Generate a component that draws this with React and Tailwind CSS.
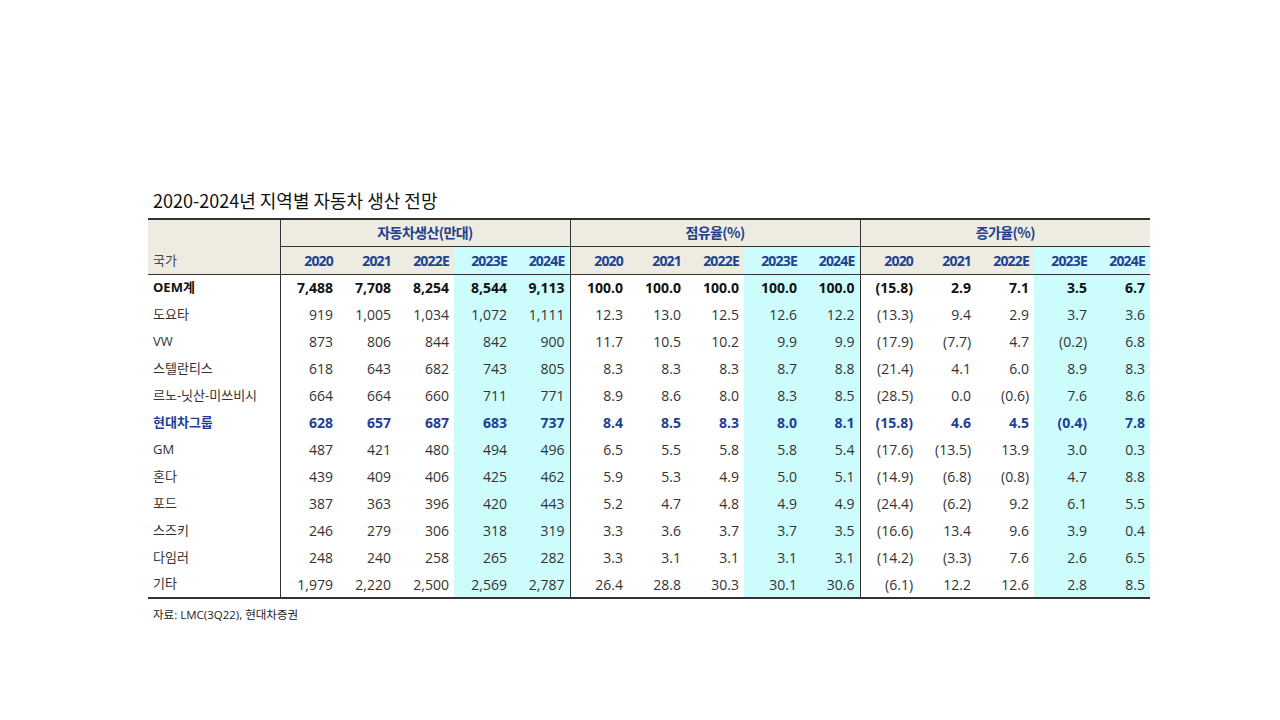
const YEARS = ['2020', '2021', '2022E', '2023E', '2024E'];
const GROUPS = ['자동차생산(만대)', '점유율(%)', '증가율(%)'];

const ROWS = [
  { name: 'OEM계', kind: 'total', v: ['7,488', '7,708', '8,254', '8,544', '9,113', '100.0', '100.0', '100.0', '100.0', '100.0', '(15.8)', '2.9', '7.1', '3.5', '6.7'] },
  { name: '도요타', v: ['919', '1,005', '1,034', '1,072', '1,111', '12.3', '13.0', '12.5', '12.6', '12.2', '(13.3)', '9.4', '2.9', '3.7', '3.6'] },
  { name: 'VW', v: ['873', '806', '844', '842', '900', '11.7', '10.5', '10.2', '9.9', '9.9', '(17.9)', '(7.7)', '4.7', '(0.2)', '6.8'] },
  { name: '스텔란티스', v: ['618', '643', '682', '743', '805', '8.3', '8.3', '8.3', '8.7', '8.8', '(21.4)', '4.1', '6.0', '8.9', '8.3'] },
  { name: '르노-닛산-미쓰비시', v: ['664', '664', '660', '711', '771', '8.9', '8.6', '8.0', '8.3', '8.5', '(28.5)', '0.0', '(0.6)', '7.6', '8.6'] },
  { name: '현대차그룹', kind: 'hmg', v: ['628', '657', '687', '683', '737', '8.4', '8.5', '8.3', '8.0', '8.1', '(15.8)', '4.6', '4.5', '(0.4)', '7.8'] },
  { name: 'GM', v: ['487', '421', '480', '494', '496', '6.5', '5.5', '5.8', '5.8', '5.4', '(17.6)', '(13.5)', '13.9', '3.0', '0.3'] },
  { name: '혼다', v: ['439', '409', '406', '425', '462', '5.9', '5.3', '4.9', '5.0', '5.1', '(14.9)', '(6.8)', '(0.8)', '4.7', '8.8'] },
  { name: '포드', v: ['387', '363', '396', '420', '443', '5.2', '4.7', '4.8', '4.9', '4.9', '(24.4)', '(6.2)', '9.2', '6.1', '5.5'] },
  { name: '스즈키', v: ['246', '279', '306', '318', '319', '3.3', '3.6', '3.7', '3.7', '3.5', '(16.6)', '13.4', '9.6', '3.9', '0.4'] },
  { name: '다임러', v: ['248', '240', '258', '265', '282', '3.3', '3.1', '3.1', '3.1', '3.1', '(14.2)', '(3.3)', '7.6', '2.6', '6.5'] },
  { name: '기타', v: ['1,979', '2,220', '2,500', '2,569', '2,787', '26.4', '28.8', '30.3', '30.1', '30.6', '(6.1)', '12.2', '12.6', '2.8', '8.5'] },
];

const FONT = { fontFamily: '"Open Sans", "Noto Sans CJK KR", sans-serif' };
const KR = { fontFamily: '"Noto Sans CJK KR", sans-serif' };

// columns 3 and 4 of every group are the forecast years, shaded cyan
const isForecast = (i) => i % 5 >= 3;
const isGroupEnd = (i) => i % 5 === 4 && i < 14;

function App() {
  return (
    <div className="w-[1280px] h-[720px] bg-white pt-[188px] pl-[148px]" style={FONT}>
      <h1 className="pl-[5px] text-[18px] leading-[24px] text-[#111] mb-[6px]" style={KR}>
        2020-2024년 지역별 자동차 생산 전망
      </h1>

      <table className="table-fixed border-collapse w-[1002px]">
        <colgroup>
          <col className="w-[132px]" />
          {Array.from({ length: 15 }).map((_, i) => (
            <col key={i} className="w-[58px]" />
          ))}
        </colgroup>
        <thead>
          <tr className="h-[27px] border-t-2 border-[#333]">
            <th rowSpan={2} className="bg-[#eeece1] border-r border-[#333] border-b border-b-[#333] text-left align-bottom pl-[5px] pb-[4px] font-normal text-[13px] text-[#444]" style={KR}>
              국가
            </th>
            {GROUPS.map((g, gi) => (
              <th
                key={g}
                colSpan={5}
                className={`bg-[#eeece1] border-b border-[#333] text-center text-[14px] font-bold tracking-[-0.6px] text-[#23408e] ${gi < 2 ? 'border-r' : ''}`}
                style={KR}
              >
                {g}
              </th>
            ))}
          </tr>
          <tr className="h-[28px] border-b border-[#333]">
            {GROUPS.flatMap((g) => YEARS.map((y) => `${g}-${y}`)).map((k, i) => (
              <th
                key={k}
                className={`text-right pr-[5px] text-[14px] font-bold tracking-[-0.8px] text-[#23408e] ${isForecast(i) ? 'bg-[#ccfcfc]' : 'bg-[#eeece1]'} ${isGroupEnd(i) ? 'border-r border-[#333]' : ''}`}
              >
                {YEARS[i % 5]}
              </th>
            ))}
          </tr>
        </thead>
        <tbody className="border-b-2 border-[#333]">
          {ROWS.map((r) => {
            const tone =
              r.kind === 'total'
                ? 'font-bold text-[#111]'
                : r.kind === 'hmg'
                ? 'font-bold text-[#1f3f96]'
                : 'text-[#333]';
            return (
              <tr key={r.name} className="h-[27px]">
                <td className={`pl-[5px] border-r border-[#333] text-[13px] whitespace-nowrap ${tone}`}>{r.name}</td>
                {r.v.map((x, i) => (
                  <td
                    key={i}
                    className={`text-right pr-[5px] text-[14px] ${tone} ${isForecast(i) ? 'bg-[#ccfcfc]' : ''} ${isGroupEnd(i) ? 'border-r border-[#333]' : ''}`}
                  >
                    {x}
                  </td>
                ))}
              </tr>
            );
          })}
        </tbody>
      </table>

      <p className="pl-[5px] mt-[7px] text-[11.5px] text-[#222]">자료: LMC(3Q22), 현대차증권</p>
    </div>
  );
}

export default App;
